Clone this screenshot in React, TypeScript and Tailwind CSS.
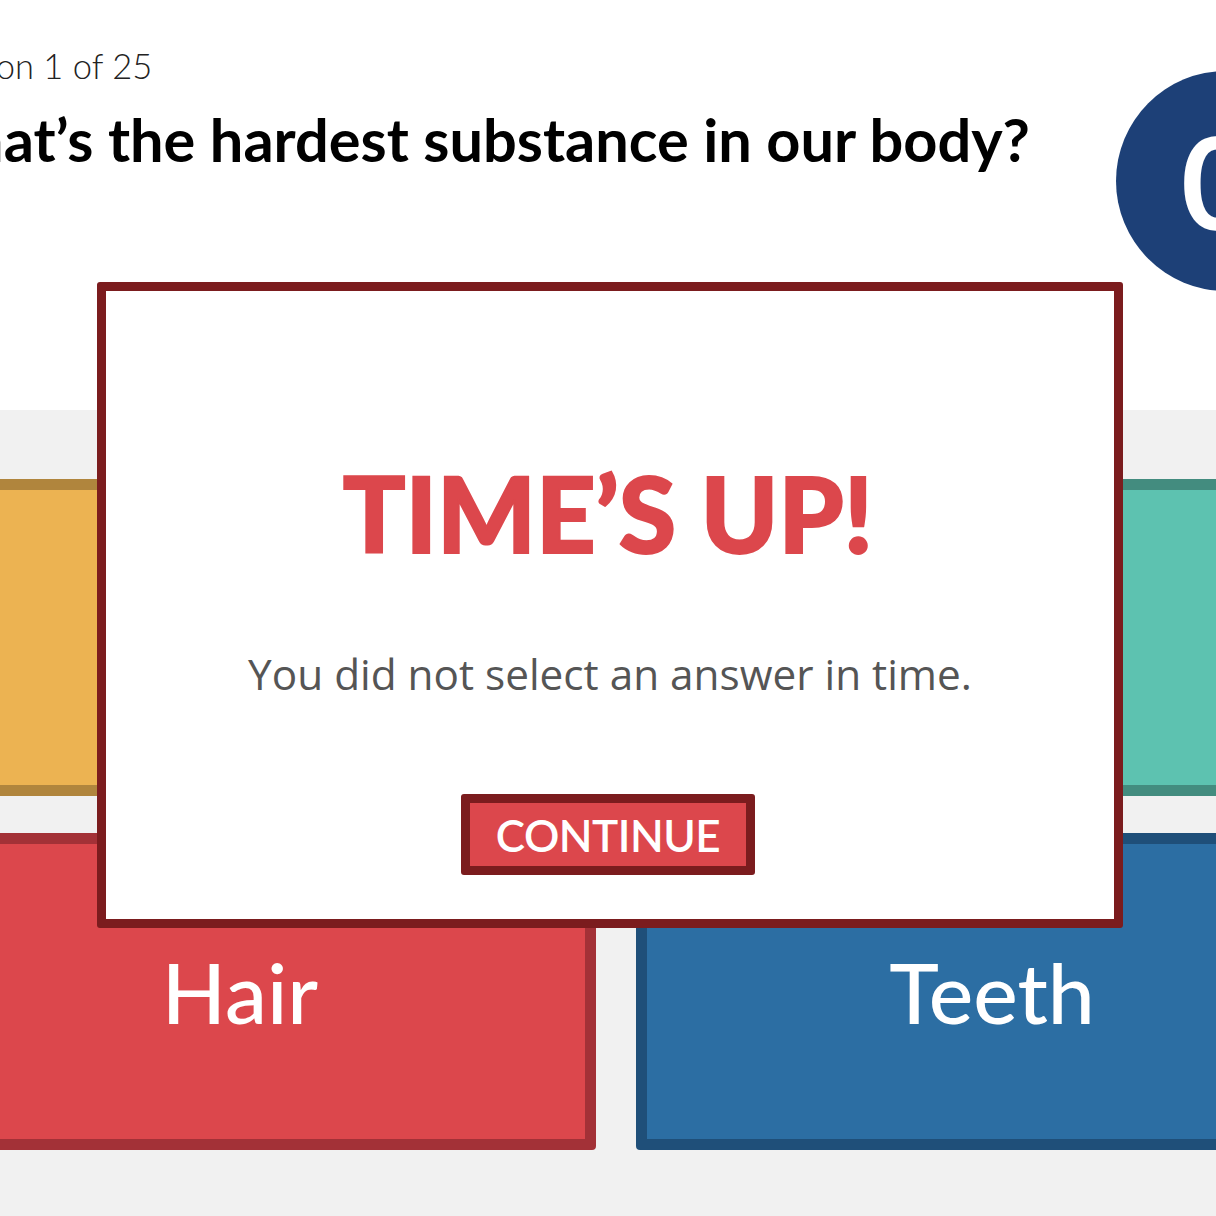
export default function App() {
  return (
    <div className="relative w-[1216px] h-[1216px] overflow-hidden bg-white font-['Lato',sans-serif]">
      {/* Header */}
      <div className="flex h-[410px]">
        <div className="w-[1116px] shrink-0 pt-[49px]">
          <div className="ml-[-103px] text-[34.5px] leading-none font-light text-[#222] whitespace-nowrap">Question 1 of 25</div>
          <div className="ml-[-92px] mt-[26px] text-[59.5px] leading-none font-bold text-black whitespace-nowrap">
            What’s the hardest substance in our body?
          </div>
        </div>
        <div className="mt-[71px] w-[220px] h-[220px] shrink-0 rounded-full bg-[#1d4077] flex items-center justify-center pr-[16px]">
          <span className="text-[128px] leading-none font-bold text-white">0</span>
        </div>
      </div>

      {/* Answers */}
      <div className="h-[806px] bg-[#f1f1f1] pt-[69px]">
        <div className="ml-[-116px] grid grid-cols-[712px_712px] gap-x-[40px] gap-y-[37px]">
          <div className="h-[317px] rounded-[4px] border-[11px] border-[#b0853d] bg-[#ecb352]" />
          <div className="h-[317px] rounded-[4px] border-[11px] border-[#438c7f] bg-[#5dc2b0]" />
          <div className="h-[317px] rounded-[4px] border-[11px] border-[#a33137] bg-[#dc474c] flex items-center justify-center">
            <span className="text-[84px] leading-none font-medium text-white">Hair</span>
          </div>
          <div className="h-[317px] rounded-[4px] border-[11px] border-[#1f4f79] bg-[#2c6ea3] flex items-center justify-center">
            <span className="text-[84px] leading-none font-medium text-white">Teeth</span>
          </div>
        </div>
      </div>

      {/* Modal */}
      <div className="absolute left-[97px] top-[282px] w-[1026px] h-[646px] rounded-[3px] border-[9px] border-[#7b1c1e] bg-white flex flex-col items-center pt-[170px]">
        <div className="ml-[-4px] text-[104px] leading-none font-black text-[#dc474c] [-webkit-text-stroke:2px_#dc474c]">TIME’S UP!</div>
        <div className="mt-[88px] text-[42.3px] leading-none text-[#555] font-['Open_Sans',sans-serif] whitespace-nowrap">
          You did not select an answer in time.
        </div>
        <div className="ml-[-4px] mt-[99px] w-[294px] h-[81px] rounded-[3px] border-[9px] border-[#7b1c1e] bg-[#dc474c] flex items-center justify-center">
          <span className="text-[44px] leading-none font-semibold text-white tracking-[-0.5px]">CONTINUE</span>
        </div>
      </div>
    </div>
  );
}
